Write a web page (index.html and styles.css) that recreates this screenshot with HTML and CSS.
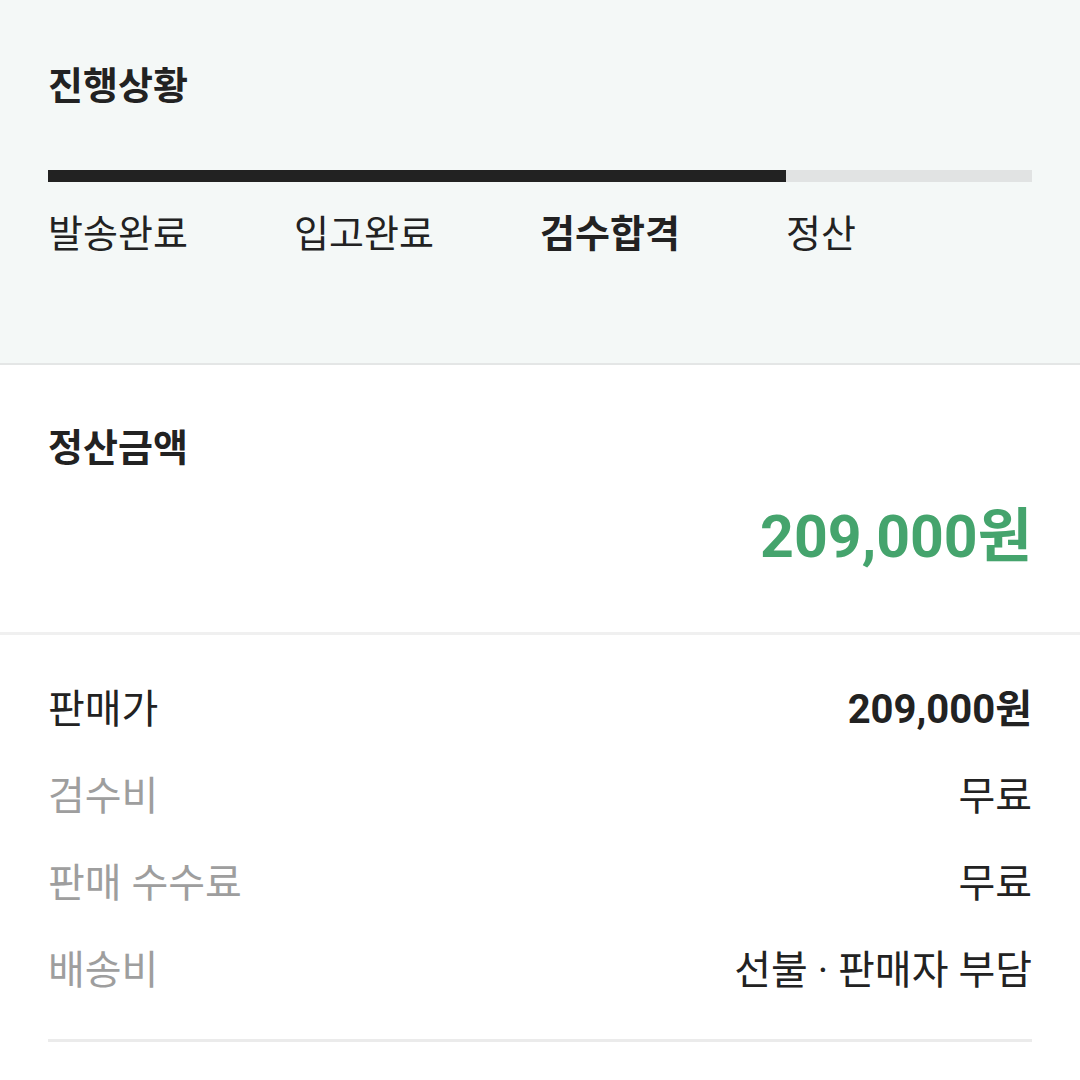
FILE: index.html
```html
<!DOCTYPE html>
<html lang="ko">
<head>
  <meta charset="UTF-8" />
  <meta name="viewport" content="width=device-width, initial-scale=1.0" />
  <title>정산 상세</title>
  <link rel="stylesheet" href="styles.css">
</head>
<body>

<!-- 진행상황 -->
<section class="progress-box">
  <h2 class="title">진행상황</h2>
  <div class="bar">
    <div class="bar-fill"></div>
  </div>
  <ul class="steps">
    <li>발송완료</li>
    <li>입고완료</li>
    <li class="current">검수합격</li>
    <li>정산</li>
  </ul>
</section>

<!-- 정산금액 -->
<section class="amount-box">
  <h2 class="title">정산금액</h2>
  <p class="amount">209,000원</p>
</section>

<!-- 상세 내역 -->
<section class="detail-box">
  <div class="row">
    <span class="label strong">판매가</span>
    <span class="value bold">209,000원</span>
  </div>
  <div class="row">
    <span class="label">검수비</span>
    <span class="value">무료</span>
  </div>
  <div class="row">
    <span class="label">판매 수수료</span>
    <span class="value">무료</span>
  </div>
  <div class="row">
    <span class="label">배송비</span>
    <span class="value">선불 · 판매자 부담</span>
  </div>
  <div class="divider"></div>
</section>

</body>
</html>
```

FILE: styles.css
```css
body {
  margin: 0;
  font-family: Roboto, "Noto Sans CJK KR", sans-serif;
  color: #222;
  background: #fff;
}

ul {
  list-style: none;
  margin: 0;
  padding: 0;
}

.title {
  margin: 0;
  font-size: 38px;
  line-height: 50px;
  font-weight: bold;
}

/* 진행상황 */
.progress-box {
  background-color: #f4f8f7;
  padding: 61px 48px 104px;
  border-bottom: 2px solid #e4e6e6;
}

.bar {
  margin-top: 59px;
  height: 12px;
  background: #e1e3e3;
}

.bar-fill {
  width: 75%;
  height: 100%;
  background: #222;
}

.steps {
  display: grid;
  grid-template-columns: repeat(4, 1fr);
  margin-top: 27px;
}

.steps li {
  font-size: 38px;
  line-height: 50px;
}

.steps li.current {
  font-weight: bold;
}

/* 정산금액 */
.amount-box {
  padding: 58px 48px 63px;
  border-bottom: 3px solid #f0f0f0;
}

.amount {
  margin: 32px 0 0;
  text-align: right;
  font-size: 59px;
  line-height: 64px;
  font-weight: bold;
  color: #45a46d;
}

/* 상세 내역 */
.detail-box {
  padding: 27px 48px 0;
}

.row {
  display: flex;
  justify-content: space-between;
  align-items: center;
  height: 87px;
  font-size: 40px;
}

.label {
  color: #9e9e9e;
}

.label.strong {
  color: #222;
}

.value.bold {
  font-weight: bold;
}

.divider {
  margin-top: 29px;
  height: 3px;
  background: #ebebeb;
}
```
